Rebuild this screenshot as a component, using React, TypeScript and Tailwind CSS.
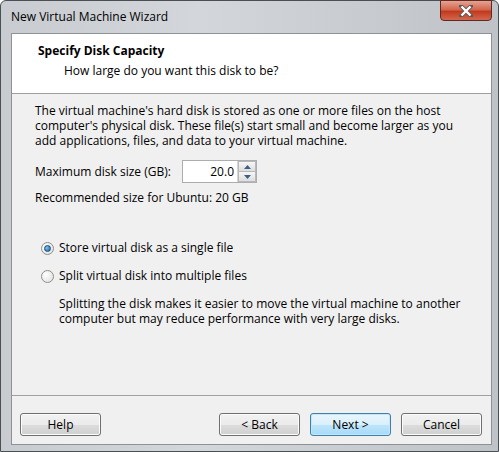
import React from 'react';

function Win7Button({ label, primary }: { label: string; primary?: boolean }) {
  return (
    <button
      className={
        'w-[81px] h-[23px] rounded-[3px] border text-[12px] text-black leading-none ' +
        (primary
          ? 'border-[#3c7fb1] shadow-[inset_0_0_0_1px_#c8e6f5] bg-[linear-gradient(to_bottom,#eaf6fd_0%,#d9f0fc_50%,#bee6fd_51%,#a7d9f5_100%)]'
          : 'border-[#707070] shadow-[inset_0_0_0_1px_#fcfcfc] bg-[linear-gradient(to_bottom,#f2f2f2_0%,#ebebeb_50%,#dddddd_51%,#cfcfcf_100%)]')
      }
    >
      {label}
    </button>
  );
}

function Radio({ checked, label }: { checked?: boolean; label: string }) {
  return (
    <label className="flex items-center gap-[5px] h-[16px]">
      <span className="w-[13px] h-[13px] rounded-full border border-[#8e8f8f] bg-[radial-gradient(circle_at_35%_35%,#ffffff,#dcdcdc)] flex items-center justify-center">
        {checked && (
          <span className="w-[7px] h-[7px] rounded-full bg-[radial-gradient(circle_at_35%_35%,#7fc4f2,#1a5f99)] border border-[#174e7c]" />
        )}
      </span>
      <span>{label}</span>
    </label>
  );
}

export default function App() {
  return (
    <div
      className="w-[499px] h-[452px] overflow-hidden bg-white"
      style={{ fontFamily: '"Open Sans", "Noto Sans", sans-serif' }}
    >
      <div className="w-[499px] h-[452px] flex flex-col rounded-t-[6px] border border-[#4a4f55] bg-[linear-gradient(to_right,#c8ccd1,#d3d6da_40%,#bfc3c8)]">
        {/* Title bar */}
        <div className="h-[32px] flex items-start justify-between pl-[10px] pr-[6px]">
          <span className="mt-[7px] text-[12px] text-black">New Virtual Machine Wizard</span>
          <div className="w-[52px] h-[21px] -mt-px rounded-b-[4px] border border-[#5e2a22] bg-[linear-gradient(to_bottom,#e6a392_0%,#d3674f_45%,#c23a1e_55%,#d3674f_100%)] flex items-center justify-center">
            <svg width="14" height="12" viewBox="0 0 14 12">
              <path
                d="M2 1 L12 11 M12 1 L2 11"
                stroke="#5a5a5a"
                strokeWidth="4"
                strokeLinecap="square"
                fill="none"
              />
              <path d="M2.5 1.5 L11.5 10.5 M11.5 1.5 L2.5 10.5" stroke="#ffffff" strokeWidth="2.4" fill="none" />
            </svg>
          </div>
        </div>

        {/* Client area */}
        <div className="flex-1 ml-[10px] mr-[6px] mb-[6px] border border-[#8d9296] bg-[#f0f0f0] flex flex-col text-[12px] text-black">
          <div className="h-[60px] bg-white border-b border-[#a0a0a0] pl-[26px] pt-[8px]">
            <div className="font-bold">Specify Disk Capacity</div>
            <div className="pl-[26px] mt-[2px]">How large do you want this disk to be?</div>
          </div>

          <div className="flex-1 pl-[23px] pr-[10px] pt-[9px]">
            <div className="leading-[15px]">
              <div>The virtual machine's hard disk is stored as one or more files on the host</div>
              <div>computer's physical disk. These file(s) start small and become larger as you</div>
              <div>add applications, files, and data to your virtual machine.</div>
            </div>

            <div className="flex items-center mt-[12px]">
              <span className="w-[147px]">Maximum disk size (GB):</span>
              <div className="flex h-[23px] border border-[#abadb3] bg-white">
                <div className="w-[54px] text-right pr-[3px] leading-[21px]">20.0</div>
                <div className="w-[19px] flex flex-col border-l border-[#d4d4d4] bg-[#f0f0f0]">
                  <div className="flex-1 border border-[#b8b8b8] bg-[linear-gradient(to_bottom,#f6f6f6,#dedede)] flex items-center justify-center">
                    <svg width="7" height="4" viewBox="0 0 7 4"><path d="M0 4 L3.5 0 L7 4 Z" fill="#3c5f88" /></svg>
                  </div>
                  <div className="flex-1 border border-t-0 border-[#b8b8b8] bg-[linear-gradient(to_bottom,#f6f6f6,#dedede)] flex items-center justify-center">
                    <svg width="7" height="4" viewBox="0 0 7 4"><path d="M0 0 L3.5 4 L7 0 Z" fill="#3c5f88" /></svg>
                  </div>
                </div>
              </div>
            </div>

            <div className="mt-[6px]">Recommended size for Ubuntu: 20 GB</div>

            <div className="mt-[33px] pl-[6px] flex flex-col gap-[12px]">
              <Radio checked label="Store virtual disk as a single file" />
              <Radio label="Split virtual disk into multiple files" />
            </div>
            <div className="mt-[12px] pl-[24px] leading-[15px]">
              <div>Splitting the disk makes it easier to move the virtual machine to another</div>
              <div>computer but may reduce performance with very large disks.</div>
            </div>
          </div>

          <div className="h-[49px] border-t border-[#a0a0a0] flex items-start pt-[17px] pl-[8px] pr-[9px]">
            <Win7Button label="Help" />
            <div className="flex-1" />
            <div className="flex gap-[10px]">
              <Win7Button label="< Back" />
              <Win7Button label="Next >" primary />
              <Win7Button label="Cancel" />
            </div>
          </div>
        </div>
      </div>
    </div>
  );
}
